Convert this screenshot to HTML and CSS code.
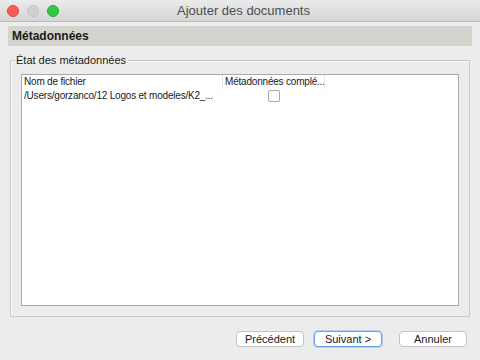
FILE: index.html
```html
<!DOCTYPE html>
<html lang="fr">
<head>
    <meta charset="UTF-8">
    <title>Ajouter des documents</title>
    <link rel="stylesheet" href="styles.css">
</head>
<body>

<div class="window">
    <div class="titlebar">
        <div class="lights">
            <span class="light red"></span>
            <span class="light gray"></span>
            <span class="light green"></span>
        </div>
        <div class="title">Ajouter des documents</div>
    </div>

    <div class="content">
        <div class="step-header">Métadonnées</div>

        <fieldset class="group">
            <legend>État des métadonnées</legend>
            <div class="table-box">
                <table class="files">
                    <thead>
                        <tr>
                            <th class="col-name">Nom de fichier</th>
                            <th class="col-meta">Métadonnées complé...</th>
                            <th></th>
                        </tr>
                    </thead>
                    <tbody>
                        <tr>
                            <td>/Users/gorzanco/12 Logos et modeles/K2_...</td>
                            <td class="check-cell"><span class="checkbox"></span></td>
                            <td></td>
                        </tr>
                    </tbody>
                </table>
            </div>
        </fieldset>

        <div class="buttons">
            <button class="btn">Précédent</button>
            <button class="btn default">Suivant &gt;</button>
            <button class="btn cancel">Annuler</button>
        </div>
    </div>
</div>

</body>
</html>
```

FILE: styles.css
```css
body {
    margin: 0;
    font-family: "Liberation Sans", Arial, sans-serif;
    font-size: 11px;
    color: #1a1a1a;
    background-color: #ececec;
}
.window {
    width: 480px;
    height: 360px;
    display: flex;
    flex-direction: column;
    background-color: #ececec;
}
.titlebar {
    height: 22px;
    display: flex;
    align-items: center;
    background: linear-gradient(#ebebeb, #d5d5d5);
    border-bottom: 1px solid #b9b9b9;
    box-sizing: border-box;
}
.lights {
    display: flex;
    gap: 8px;
    padding-left: 7px;
    width: 120px;
}
.light {
    width: 12px;
    height: 12px;
    border-radius: 50%;
    box-sizing: border-box;
}
.red {
    background-color: #fc5b57;
    border: 1px solid #e2463f;
}
.gray {
    background-color: #d0d0d0;
    border: 1px solid #c2c2c2;
}
.green {
    background-color: #33c748;
    border: 1px solid #27aa35;
}
.title {
    flex: 1;
    text-align: center;
    padding-right: 120px;
    font-size: 13px;
    color: #4d4d4d;
}
.content {
    flex: 1;
    display: flex;
    flex-direction: column;
    padding: 4px 8px 0 8px;
}
.step-header {
    height: 20px;
    line-height: 20px;
    background-color: #d4d3ce;
    font-weight: bold;
    font-size: 12px;
    padding-left: 4px;
}
.group {
    margin: 8px 2px 0 2px;
    border: 1px solid #c8c8c8;
    box-shadow: inset 1px 1px 0 #f8f8f8;
    padding: 8px 10px 10px 10px;
}
.group legend {
    margin-left: -6px;
    padding: 0 2px 0 1px;
    color: #1a1a1a;
}
.table-box {
    height: 232px;
    background-color: #fff;
    border: 1px solid #a9a9a9;
    box-sizing: border-box;
}
.files {
    border-collapse: collapse;
    table-layout: fixed;
    width: 100%;
    font-size: 10px;
    letter-spacing: -0.2px;
}
.files th {
    font-weight: normal;
    text-align: left;
    padding: 0 2px;
    height: 14px;
    line-height: 14px;
    white-space: nowrap;
    overflow: hidden;
}
.files td {
    padding: 0 2px;
    height: 14px;
    line-height: 14px;
    white-space: nowrap;
    overflow: hidden;
}
.col-name {
    width: 196px;
}
.col-meta {
    width: 97px;
    border-left: 1px solid #e2e2e2;
    border-right: 1px solid #e8e8e8;
}
.check-cell {
    text-align: center;
}
.checkbox {
    display: inline-block;
    width: 10px;
    height: 10px;
    border: 1px solid #a8a8a8;
    border-radius: 2px;
    background-color: #fff;
    vertical-align: middle;
}
.buttons {
    display: flex;
    justify-content: flex-end;
    gap: 10px;
    padding: 14px 5px 0 0;
}
.btn {
    height: 16px;
    width: 68px;
    padding: 0;
    font-family: "Liberation Sans", Arial, sans-serif;
    font-size: 11px;
    color: #1a1a1a;
    background-color: #fff;
    border: 1px solid #c4c4c4;
    border-radius: 4px;
}
.btn.default {
    border-color: #6aa0e8;
    box-shadow: 0 0 0 1px #b4d0f4;
}
.btn.cancel {
    margin-left: 7px;
}
```
